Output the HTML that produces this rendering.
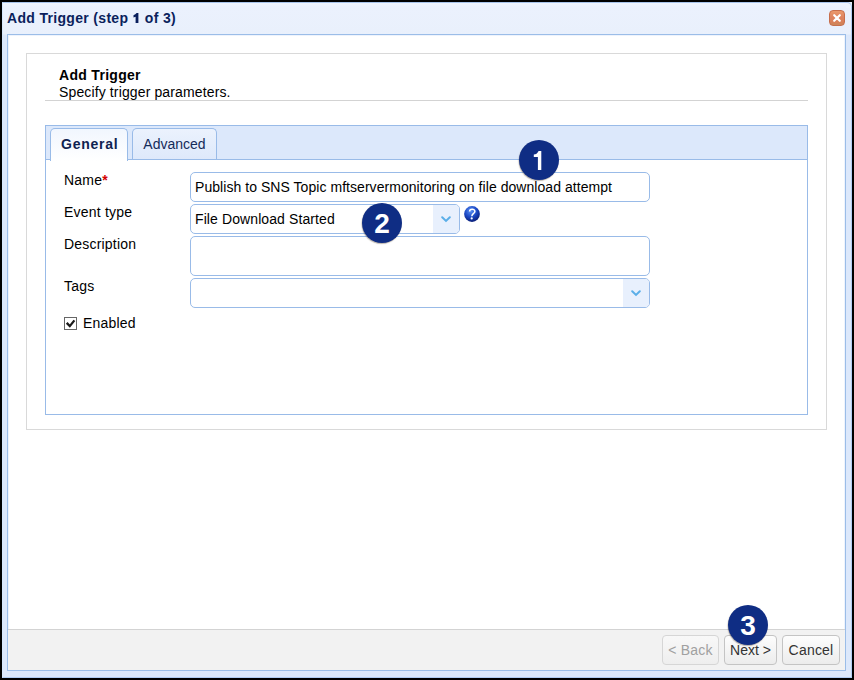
<!DOCTYPE html>
<html><head><meta charset="utf-8">
<style>
*{margin:0;padding:0;box-sizing:border-box}
html,body{width:854px;height:680px;overflow:hidden;background:#000;font-family:"Liberation Sans",sans-serif;font-size:14px;color:#000}
.a{position:absolute}
#win{left:2px;top:2px;width:850px;height:676px;background:linear-gradient(#f0f5fe 0,#ebf1fd 4px,#e9f0fc 31px,#dce8fb 32px);border:1px solid;border-color:#a8c4ec #b2cdf4 #b0ccf3 #d6e8fd;}
#title{left:7px;top:10px;font-weight:bold;font-size:14px;color:#0a1f5c;letter-spacing:0.32px;line-height:16px;white-space:nowrap}
#close{left:829px;top:10px;width:16px;height:16px;border-radius:4px;background:linear-gradient(#eb9a6c,#de8460 45%,#d98058 80%,#c9885a);border:1px solid #c76e4c}
#body{left:7px;top:34px;width:839px;height:637px;background:#fff;border:1px solid #9bbde8;box-shadow:inset 0 0 0 1px #eef3fc}
#panel{left:26px;top:53px;width:801px;height:377px;border:1px solid #d9d9d9}
#hdr1{left:59px;top:67px;font-weight:bold;line-height:16px;white-space:nowrap;letter-spacing:0.3px}
#hdr2{left:59px;top:84px;line-height:16px;white-space:nowrap;letter-spacing:0.13px}
#hr{left:45px;top:100px;width:763px;height:1px;background:#d3d3d3}
#tabp{left:45px;top:125px;width:763px;height:290px;border:1px solid #99bbe8}
#strip{left:46px;top:126px;width:761px;height:34px;background:#dce8fb;border-bottom:1px solid #99bbe8}
.tab{top:128px;height:32px;border:1px solid #99bbe8;border-bottom:none;border-radius:5px 5px 0 0;line-height:30px;text-align:center;white-space:nowrap}
#tab1{left:50px;width:78px;background:linear-gradient(#f1f6fe,#fff);font-weight:bold;color:#0f2350;height:33px;letter-spacing:0.75px;text-align:left;padding-left:10px}
#tab2{left:132px;width:85px;height:31px;background:linear-gradient(#ebf2fd,#dee9fb);color:#142b5a}
.lbl{left:64px;line-height:16px;white-space:nowrap;letter-spacing:0.2px}
.fld{left:190px;width:460px;border:1px solid #99bbe8;border-radius:5px;background:#fff}
.ftxt{left:4px;line-height:16px;white-space:nowrap;letter-spacing:0.05px}
.trig{top:0;right:0;width:26px;height:100%;background:#e8f0fd;border-radius:0 4px 4px 0}
.chev{left:8px;width:10px;height:10px}
#foot{left:8px;top:629px;width:837px;height:41px;background:#f2f2f2;border-top:1px solid #d3d3d3}
.btn{top:635px;height:30px;border:1px solid #c4c4c4;border-radius:4px;background:linear-gradient(#fdfdfd,#ececec);line-height:28px;text-align:center;white-space:nowrap;color:#333}
.call{width:40px;height:40px;border-radius:50%;background:#0f2d84;color:#fff;font-weight:bold;font-size:28px;line-height:42.5px;text-align:center;box-shadow:-0.5px 1px 1px rgba(60,40,20,0.35)}
</style></head><body>
<div id="win" class="a"></div>
<div class="a" style="left:846px;top:2px;width:6px;height:6px;background:#e6eef8"><div class="a" style="left:0;top:0;width:6px;height:6px;border-top:1px solid #a8c4ec;border-right:1px solid #b2cdf4;border-top-right-radius:5px;background:#eef4fd"></div></div>
<div id="title" class="a">Add Trigger (step <span id="t1" style="position:relative;color:transparent">1<svg style="position:absolute;left:0;top:0" width="10" height="16"><path d="M3.6 2.9L5.4 2.9L5.4 12.9L2.6 12.9L2.6 6.8L0.5 7.4L0.5 5.2Q2.6 4.4 3.6 2.9Z" fill="#0a1f5c"/></svg></span> of 3)</div>
<div id="close" class="a"><svg width="14" height="14" style="position:absolute;left:0;top:0"><path d="M4.2 4.2L9.8 9.8M9.8 4.2L4.2 9.8" stroke="#fff" stroke-width="2.2" stroke-linecap="round"/></svg></div>
<div id="body" class="a"></div>
<div id="panel" class="a"></div>
<div id="hdr1" class="a">Add Trigger</div>
<div id="hdr2" class="a">Specify trigger parameters.</div>
<div id="hr" class="a"></div>
<div id="tabp" class="a"></div>
<div id="strip" class="a"></div>
<div id="tab1" class="a tab">General</div>
<div id="tab2" class="a tab">Advanced</div>

<div class="a lbl" style="top:172px">Name<span style="color:#d40000;font-weight:bold">*</span></div>
<div class="a fld" style="top:172px;height:30px"><div class="a ftxt" style="top:6px">Publish to SNS Topic mftservermonitoring on file download attempt</div></div>

<div class="a lbl" style="top:204px">Event type</div>
<div class="a fld" style="top:204px;height:30px;width:270px"><div class="a ftxt" style="top:6px;letter-spacing:0.1px">File Download Started</div>
<div class="a trig"><svg class="a chev" style="top:9px" viewBox="0 0 10 10"><path d="M1.2 3.2L5 6.9L8.8 3.2" stroke="#5aaee8" stroke-width="2" stroke-linecap="round" fill="none"/></svg></div></div>
<svg class="a" style="left:464px;top:206px" width="16" height="16" viewBox="0 0 16 16"><defs><radialGradient id="hg" cx="0.42" cy="0.3" r="0.7"><stop offset="0" stop-color="#5c92f4"/><stop offset="0.55" stop-color="#1c48c4"/><stop offset="1" stop-color="#0a1f7a"/></radialGradient></defs><circle cx="8" cy="8" r="7.9" fill="url(#hg)"/><path d="M5.6 5.4C5.6 2.5 10.9 2.5 10.9 5.4C10.9 7.5 7.9 7.4 7.8 10.3" stroke="#fff" stroke-width="1.5" fill="none"/><circle cx="7.7" cy="12.4" r="1.1" fill="#fff"/></svg>

<div class="a lbl" style="top:236px">Description</div>
<div class="a fld" style="top:236px;height:40px"></div>

<div class="a lbl" style="top:278px">Tags</div>
<div class="a fld" style="top:278px;height:30px"><div class="a trig"><svg class="a chev" style="top:9px" viewBox="0 0 10 10"><path d="M1.2 3.2L5 6.9L8.8 3.2" stroke="#5aaee8" stroke-width="2" stroke-linecap="round" fill="none"/></svg></div></div>

<div class="a" style="left:64px;top:317px;width:13px;height:13px;border:1px solid #666;background:#fff"><svg width="11" height="11" style="position:absolute;left:0;top:0"><path d="M1.7 4.9L4.8 8.1L9.4 2.4" stroke="#1a1a1a" stroke-width="2.3" fill="none"/></svg></div>
<div class="a lbl" style="left:83px;top:315px">Enabled</div>

<div id="foot" class="a"></div>
<div class="a btn" style="left:662px;width:57px;color:#a0a0a0;border-color:#d6d6d6;background:linear-gradient(#f8f8f8,#eeeeee);letter-spacing:0.25px">&lt; Back</div>
<div class="a btn" style="left:724px;width:53px">Next &gt;</div>
<div class="a btn" style="left:782px;width:58px;letter-spacing:0.2px">Cancel</div>

<div class="a call" style="left:519px;top:140px"><svg width="40" height="40" style="position:absolute;left:0;top:0"><path d="M19.6 10.9L22.3 10.9L22.3 29.9L18.9 29.9L18.9 17.1L14.8 17.1L14.8 14.4Q17.9 14.4 19.6 10.9Z" fill="#fff"/></svg></div>
<div class="a call" style="left:362px;top:203px">2</div>
<div class="a call" style="left:728px;top:605px">3</div>
</body></html>
